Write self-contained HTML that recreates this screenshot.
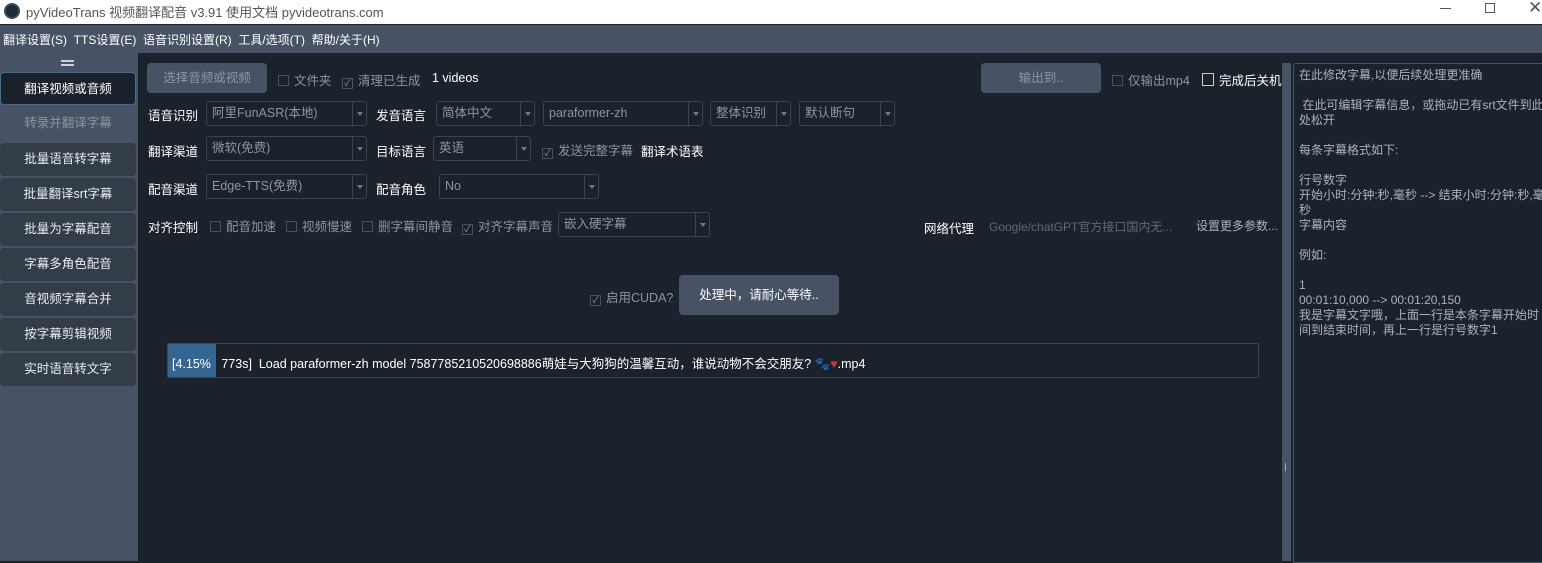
<!DOCTYPE html>
<html><head><meta charset="utf-8"><style>
*{box-sizing:border-box;margin:0;padding:0}
body{width:1542px;height:561px;overflow:hidden;background:#1b222c;font-family:"Liberation Sans","Noto Sans CJK SC",sans-serif;font-size:12.5px;color:#e6e9ee;position:relative}
.a{position:absolute;white-space:nowrap}
.title{left:0;top:0;width:1542px;height:24px;background:#fff;color:#555;font-size:13px}
.menu{left:0;top:24px;width:1542px;height:29px;background:#475364;border-top:1px solid #1b222c;color:#fff;font-size:12px}
.side{left:0;top:53px;width:138px;height:508px;background:#475364}
.sb{position:absolute;left:0;width:136px;height:33px;background:#333d48;border-radius:4px;text-align:center;line-height:33px;color:#e8ecf0;font-size:12.5px}
.combo{position:absolute;height:25px;border:1px solid #3a4553;border-radius:3px;color:#8a96a4;padding-left:5px;line-height:23px;font-size:12.5px}
.combo:before{content:"";position:absolute;right:13px;top:0;width:1px;height:23px;background:#3a4553}
.combo:after{content:"";position:absolute;right:3px;top:10px;width:0;height:0;border-left:3px solid transparent;border-right:3px solid transparent;border-top:4px solid #6e7a88}
.lbl{position:absolute;color:#fff;font-size:12.5px}
.cb{position:absolute;color:#8a96a4;font-size:12.5px}
.cb i{display:inline-block;width:11px;height:11px;border:1px solid #48525f;margin-right:5px;vertical-align:-1px;font-style:normal;font-size:9px;line-height:9px;text-align:center;color:#8a96a4}
.btn{position:absolute;background:#475364;border-radius:4px;text-align:center;color:#8a96a4}
</style></head><body>
<div class="a title">
 <div class="a" style="left:4px;top:3px;width:16px;height:16px;border-radius:50%;background:#1d2a33;border:2px solid #3b4d59"></div>
 <div class="a" style="left:26px;top:2px">pyVideoTrans 视频翻译配音 v3.91 使用文档 pyvideotrans.com</div>
 <div class="a" style="left:1440px;top:8px;width:11px;height:1px;background:#555"></div>
 <div class="a" style="left:1485px;top:3px;width:10px;height:10px;border:1px solid #555"></div>
 <div class="a" style="left:1528px;top:-2px;font-size:17px;color:#555">✕</div>
</div>
<div class="a menu"><span class="a" style="left:3px;top:6px">翻译设置(S)&nbsp; TTS设置(E)&nbsp; 语音识别设置(R)&nbsp; 工具/选项(T)&nbsp; 帮助/关于(H)</span></div>
<div class="a side">
 <div class="a" style="left:61px;top:7px;width:13px;height:2px;background:#ccd;box-shadow:0 4px 0 #ccd"></div>
 <div class="sb" style="top:19px;background:#1b222c;border:1px solid #3d6e95;color:#fff">翻译视频或音频</div>
 <div class="sb" style="top:54px;background:#475364;color:#8a96a4">转录并翻译字幕</div>
 <div class="sb" style="top:90px">批量语音转字幕</div>
 <div class="sb" style="top:125px">批量翻译srt字幕</div>
 <div class="sb" style="top:160px">批量为字幕配音</div>
 <div class="sb" style="top:195px">字幕多角色配音</div>
 <div class="sb" style="top:230px">音视频字幕合并</div>
 <div class="sb" style="top:265px">按字幕剪辑视频</div>
 <div class="sb" style="top:300px">实时语音转文字</div>
</div>
<div class="btn" style="left:147px;top:63px;width:120px;height:30px;line-height:30px">选择音频或视频</div>
<div class="cb" style="left:278px;top:70px"><i></i>文件夹</div>
<div class="cb" style="left:342px;top:70px"><i>✓</i>清理已生成</div>
<div class="lbl" style="left:432px;top:71px">1 videos</div>
<div class="btn" style="left:981px;top:63px;width:120px;height:30px;line-height:30px">输出到..</div>
<div class="cb" style="left:1112px;top:70px"><i></i>仅输出mp4</div>
<div class="cb" style="left:1202px;top:70px;color:#fff"><i style="border-color:#ccc;width:12px;height:13px"></i>完成后关机</div>

<div class="lbl" style="left:148px;top:105px">语音识别</div>
<div class="combo" style="left:206px;top:101px;width:161px">阿里FunASR(本地)</div>
<div class="lbl" style="left:376px;top:105px">发音语言</div>
<div class="combo" style="left:436px;top:101px;width:99px">简体中文</div>
<div class="combo" style="left:543px;top:101px;width:160px">paraformer-zh</div>
<div class="combo" style="left:710px;top:101px;width:81px">整体识别</div>
<div class="combo" style="left:799px;top:101px;width:96px">默认断句</div>

<div class="lbl" style="left:148px;top:141px">翻译渠道</div>
<div class="combo" style="left:206px;top:136px;width:161px">微软(免费)</div>
<div class="lbl" style="left:376px;top:141px">目标语言</div>
<div class="combo" style="left:433px;top:136px;width:98px">英语</div>
<div class="cb" style="left:542px;top:140px"><i>✓</i>发送完整字幕</div>
<div class="lbl" style="left:641px;top:141px">翻译术语表</div>

<div class="lbl" style="left:148px;top:179px">配音渠道</div>
<div class="combo" style="left:206px;top:174px;width:161px">Edge-TTS(免费)</div>
<div class="lbl" style="left:376px;top:179px">配音角色</div>
<div class="combo" style="left:439px;top:174px;width:160px">No</div>

<div class="lbl" style="left:148px;top:217px">对齐控制</div>
<div class="cb" style="left:210px;top:216px"><i></i>配音加速</div>
<div class="cb" style="left:286px;top:216px"><i></i>视频慢速</div>
<div class="cb" style="left:362px;top:216px"><i></i>删字幕间静音</div>
<div class="cb" style="left:462px;top:216px"><i>✓</i>对齐字幕声音</div>
<div class="combo" style="left:558px;top:212px;width:152px">嵌入硬字幕</div>

<div class="lbl" style="left:924px;top:218px">网络代理</div>
<div class="cb" style="left:989px;top:218px;color:#5e6a78;font-size:12px">Google/chatGPT官方接口国内无...</div>
<div class="cb" style="left:1196px;top:217px;color:#a8b3c0;font-size:12px">设置更多参数...</div>

<div class="cb" style="left:590px;top:287px"><i>✓</i>启用CUDA?</div>
<div class="btn" style="left:679px;top:275px;height:40px;line-height:40px;color:#fff;width:160px">处理中，请耐心等待..</div>

<div class="a" style="left:167px;top:343px;width:1092px;height:35px;border:1px solid #3a4553;border-radius:2px"></div>
<div class="a" style="left:168px;top:344px;width:48px;height:33px;background:#336791"></div>
<div class="lbl" style="left:172px;top:353px;white-space:nowrap">[4.15%&nbsp;&nbsp; 773s]&nbsp; Load paraformer-zh model 7587785210520698886萌娃与大狗狗的温馨互动，谁说动物不会交朋友? <span style="color:#d2691e">🐾</span><span style="color:#d03040">♥</span>.mp4</div>

<div class="a" style="left:1282px;top:63px;width:9px;height:498px;background:#475364"></div>
<div class="a" style="left:1285px;top:463px;width:1px;height:8px;background:#aab"></div>
<div class="a" style="left:1293px;top:63px;width:260px;height:500px;border:1px solid #475364;border-radius:3px 0 0 0"></div>
<div class="a" style="left:1299px;top:68px;color:#a8b3c0;font-size:12px;line-height:15px;white-space:pre">在此修改字幕,以便后续处理更准确

 在此可编辑字幕信息，或拖动已有srt文件到此
处松开

每条字幕格式如下:

行号数字
开始小时:分钟:秒,毫秒 --> 结束小时:分钟:秒,毫
秒
字幕内容

例如:

1
00:01:10,000 --> 00:01:20,150
我是字幕文字哦，上面一行是本条字幕开始时
间到结束时间，再上一行是行号数字1</div>
</body></html>
